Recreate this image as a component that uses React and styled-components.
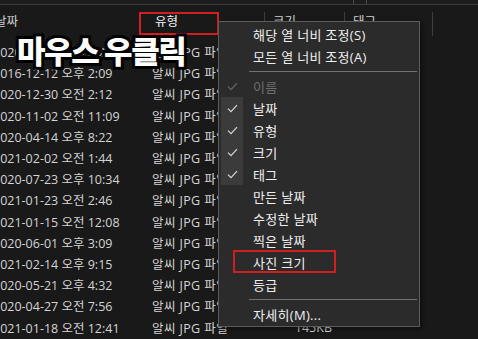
import React from 'react';
import styled, { createGlobalStyle } from 'styled-components';

const GlobalStyle = createGlobalStyle`
  html, body { margin: 0; padding: 0; background: #191919; }
  body { width: 478px; height: 339px; overflow: hidden; }
`;

const rows = [
  ['2020-10-05 오후 2:21', '128KB'],
  ['2016-12-12 오후 2:09', '96KB'],
  ['2020-12-30 오전 2:12', '210KB'],
  ['2020-11-02 오전 11:09', '88KB'],
  ['2020-04-14 오후 8:22', '132KB'],
  ['2021-02-02 오전 1:44', '175KB'],
  ['2020-07-23 오후 10:34', '64KB'],
  ['2021-01-23 오전 2:46', '119KB'],
  ['2021-01-15 오전 12:08', '201KB'],
  ['2020-06-01 오후 3:09', '153KB'],
  ['2021-02-14 오후 9:15', '98KB'],
  ['2020-05-21 오후 4:32', '187KB'],
  ['2020-04-27 오전 7:56', '121KB'],
  ['2021-01-18 오전 12:41', '145KB'],
];

const menuItems = [
  { label: '해당 열 너비 조정(S)' },
  { label: '모든 열 너비 조정(A)' },
  { sep: true },
  { label: '이름', check: true, disabled: true },
  { label: '날짜', check: true },
  { label: '유형', check: true },
  { label: '크기', check: true },
  { label: '태그', check: true },
  { label: '만든 날짜' },
  { label: '수정한 날짜' },
  { label: '찍은 날짜' },
  { label: '사진 크기' },
  { label: '등급' },
  { sep: true },
  { label: '자세히(M)...' },
];

const Screen = styled.div`
  position: relative;
  width: 478px;
  height: 339px;
  overflow: hidden;
  background: #191919;
  font-family: "Open Sans", "Noto Sans CJK KR", sans-serif;
  font-size: 12.5px;
  color: #d4d4d4;
`;

const TopStrip = styled.div`
  display: flex;
  height: 4px;
  border-bottom: 1px solid #3c3c3c;
  background: #1d1d1d;
`;

const StripPart = styled.div`
  width: ${p => p.$w}px;
  flex: ${p => (p.$w ? 'none' : '1')};
  border-right: ${p => (p.$line ? '1px solid #4a4a4a' : 'none')};
`;

const Header = styled.div`
  display: flex;
  height: 31px;
  margin-left: -5px;
  align-items: stretch;
`;

const HeadCell = styled.div`
  width: ${p => p.$w}px;
  flex: none;
  display: flex;
  align-items: center;
  padding-left: ${p => p.$pad || 0}px;
  box-sizing: border-box;
  color: ${p => (p.$bright ? '#f2f2f2' : '#cfcfcf')};
  position: relative;

  &::after {
    content: '';
    position: absolute;
    right: 0;
    top: 7px;
    bottom: 0;
    width: 1px;
    background: ${p => (p.$divider ? '#3e3e3e' : 'transparent')};
  }
`;

const List = styled.div`
  padding-top: 5px;
  margin-left: -7px;
`;

const Row = styled.div`
  display: flex;
  height: 21.2px;
  align-items: center;
  white-space: nowrap;
`;

const DateCell = styled.div`
  width: 159px;
  flex: none;
`;

const TypeCell = styled.div`
  width: 113px;
  flex: none;
  letter-spacing: 0.4px;
`;

const SizeCell = styled.div`
  width: 80px;
  flex: none;
  text-align: right;
  padding-right: 13px;
  box-sizing: border-box;
`;

const Callout = styled.div`
  position: absolute;
  left: 17px;
  top: 31px;
  font-family: "Noto Sans CJK KR", sans-serif;
  font-weight: 900;
  font-size: 31px;
  line-height: 38px;
  letter-spacing: -1.4px;
  color: #ffffff;
  -webkit-text-stroke: 6px #000;
  paint-order: stroke fill;
`;

const Mark = styled.div`
  position: absolute;
  left: ${p => p.$x}px;
  top: ${p => p.$y}px;
  width: ${p => p.$w}px;
  height: ${p => p.$h}px;
  border: 2px solid #d01f1f;
  box-sizing: border-box;
  pointer-events: none;
`;

const Menu = styled.div`
  position: absolute;
  left: 218px;
  top: 21px;
  width: 202px;
  box-sizing: border-box;
  padding: 1px 2px 1px 2px;
  background: #2b2b2b;
  border: 1px solid #5c5c5c;
  box-shadow: 2px 2px 4px rgba(0, 0, 0, 0.45);
  font-family: "Open Sans", "Noto Sans CJK KR", sans-serif;
  font-size: 13px;
  color: #f0f0f0;
`;

const Item = styled.div`
  position: relative;
  display: flex;
  align-items: center;
  height: 22px;
  color: ${p => (p.$disabled ? '#6d6d6d' : '#f0f0f0')};
`;

const CheckCell = styled.div`
  width: 22px;
  height: 22px;
  flex: none;
  display: flex;
  align-items: center;
  justify-content: center;
  background: ${p => (p.$on ? '#3b3b3b' : 'transparent')};
`;

const Label = styled.span`
  margin-left: 10px;
  white-space: nowrap;
  letter-spacing: 0.3px;
`;

const Separator = styled.div`
  height: 8px;
  display: flex;
  align-items: center;
  padding-left: 28px;

  &::after {
    content: '';
    flex: 1;
    height: 1px;
    background: #707070;
  }
`;

const Check = ({ color }) => (
  <svg width="11" height="9" viewBox="0 0 11 9">
    <path d="M1 4.6 L4 7.6 L10 1.2" fill="none" stroke={color} strokeWidth="1.2" />
  </svg>
);

export default function App() {
  return (
    <Screen>
      <GlobalStyle />
      <TopStrip>
        <StripPart $w={353} $line />
        <StripPart $w={12} $line />
        <StripPart />
      </TopStrip>
      <Header>
        <HeadCell $w={144}>날짜</HeadCell>
        <HeadCell $w={126} $pad={16} $bright $divider>유형</HeadCell>
        <HeadCell $w={80} $pad={8} $divider>크기</HeadCell>
        <HeadCell $w={88} $pad={8} $divider>태그</HeadCell>
        <HeadCell $w={60} />
      </Header>
      <List>
        {rows.map(([date, size]) => (
          <Row key={date}>
            <DateCell>{date}</DateCell>
            <TypeCell>알씨 JPG 파일</TypeCell>
            <SizeCell>{size}</SizeCell>
          </Row>
        ))}
      </List>

      <Mark $x={139} $y={12} $w={80} $h={23} />
      <Callout>마우스 우클릭</Callout>

      <Menu>
        {menuItems.map((it, i) =>
          it.sep ? (
            <Separator key={i} />
          ) : (
            <Item key={i} $disabled={it.disabled}>
              <CheckCell $on={it.check && !it.disabled}>
                {it.check && <Check color={it.disabled ? '#6a6a6a' : '#d8d8d8'} />}
              </CheckCell>
              <Label>{it.label}</Label>
            </Item>
          )
        )}
      </Menu>
      <Mark $x={233} $y={250} $w={103} $h={23} />
    </Screen>
  );
}
